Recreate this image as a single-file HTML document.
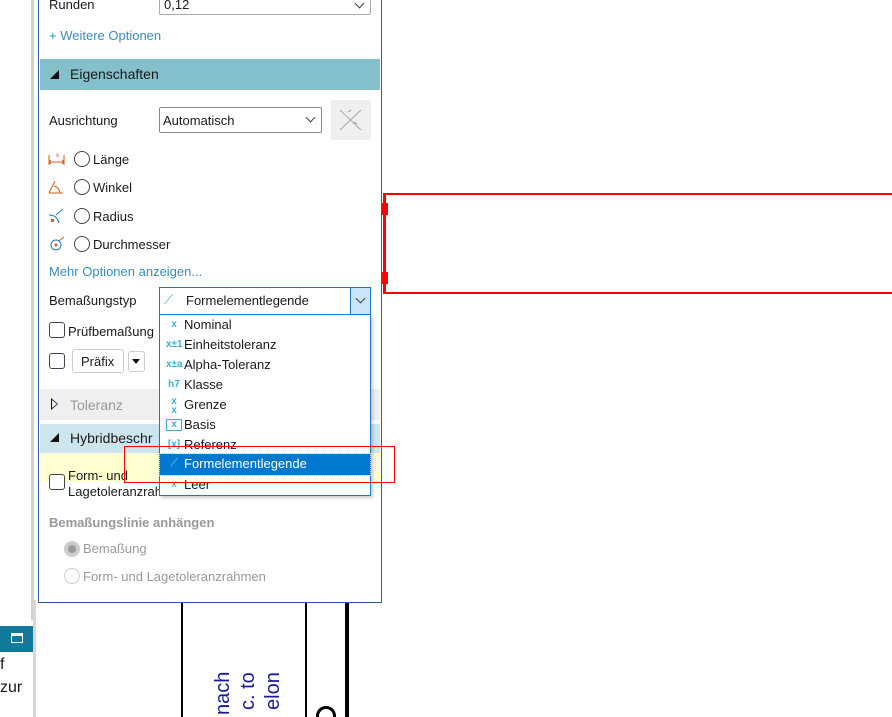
<!DOCTYPE html>
<html><head><meta charset="utf-8"><style>
*{margin:0;padding:0;box-sizing:border-box}
html,body{width:892px;height:717px;overflow:hidden}
body{background:#fff;font-family:"Liberation Sans",Arial,sans-serif;font-size:13px;color:#1a1a1a;position:relative}
.a{position:absolute}
.lbl{position:absolute;font-size:13px;color:#1a1a1a}
.rad{position:absolute;width:16px;height:16px;border:1px solid #444;border-radius:50%;background:#fff}
.cb{position:absolute;width:16px;height:16px;border:1px solid #444;border-radius:3px;background:#fff}
.link{position:absolute;color:#3a8dbb;font-size:13px}
.item{position:absolute;left:0;width:210px;height:20px;line-height:20px;font-size:13px}
.item .ic{position:absolute;left:6px;width:16px;text-align:center;color:#3ab0d0;font-size:10px;font-weight:bold}
.item .t{position:absolute;left:24px}
.chev{position:absolute;width:7px;height:7px;border-right:1px solid #444;border-bottom:1px solid #444;transform:rotate(45deg)}
.vt{position:absolute;width:22px;height:80px;color:#1a1a9a;font-size:20px;writing-mode:vertical-rl;transform:rotate(180deg);line-height:22px;text-align:end}
</style></head><body>
<div class="a" style="left:31px;top:0;width:3px;height:620px;background:#d0d0d0"></div>
<div class="a" style="left:0;top:626px;width:33px;height:26px;background:#127a9c"></div>
<div class="a" style="left:11px;top:633px;width:12px;height:10px;border:1px solid #fff;border-top-width:3px"></div>
<div class="a" style="left:33px;top:600px;width:3px;height:117px;background:#d8d8d8"></div>
<div class="lbl" style="left:0;top:656px;font-size:16px">f</div>
<div class="lbl" style="left:0;top:679px;font-size:16px">zur</div>

<div class="a" style="left:383px;top:193px;width:509px;height:2px;background:#f00"></div>
<div class="a" style="left:383px;top:292px;width:509px;height:2px;background:#f00"></div>
<div class="a" style="left:383px;top:193px;width:3px;height:101px;background:#f00"></div>
<div class="a" style="left:382px;top:203px;width:6px;height:12px;background:#f00"></div>
<div class="a" style="left:382px;top:272px;width:6px;height:12px;background:#f00"></div>
<div class="a" style="left:181px;top:602px;width:2px;height:115px;background:#000"></div>
<div class="a" style="left:305px;top:602px;width:2px;height:115px;background:#000"></div>
<div class="a" style="left:345px;top:602px;width:4px;height:115px;background:#000"></div>
<div class="vt" style="left:212px;top:672px">nach</div>
<div class="vt" style="left:237px;top:672px">c. to</div>
<div class="vt" style="left:262px;top:672px">elon</div>
<div class="a" style="left:316px;top:706px;width:20px;height:20px;border:3px solid #000;border-radius:50%"></div>

<div class="a" style="left:38px;top:-2px;width:344px;height:605px;border:1px solid #2c5ea8;background:#fff"></div>
<div class="lbl" style="left:49px;top:-3px">Runden</div>
<div class="a" style="left:159px;top:-6px;width:212px;height:21px;border:1px solid #aaa;border-radius:2px;background:#fff"></div>
<div class="lbl" style="left:164px;top:-3px">0,12</div>
<div class="chev" style="left:356px;top:0px"></div>
<div class="link" style="left:49px;top:28px">+ Weitere Optionen</div>
<div class="a" style="left:40px;top:59px;width:340px;height:31px;background:#84bfcc"></div>
<div class="a" style="left:50px;top:70px;width:0;height:0;border-left:9px solid transparent;border-bottom:9px solid #111"></div>
<div class="lbl" style="left:70px;top:66px;font-size:14px">Eigenschaften</div>

<div class="lbl" style="left:49px;top:113px">Ausrichtung</div>
<div class="a" style="left:159px;top:107px;width:163px;height:26px;border:1px solid #888;border-radius:2px"></div>
<div class="lbl" style="left:163px;top:113px">Automatisch</div>
<div class="chev" style="left:307px;top:114px"></div>
<div class="a" style="left:331px;top:100px;width:40px;height:40px;background:#efefef;border-radius:3px">
<svg width="40" height="40"><path d="M9 10L30 30M30 10L9 30" stroke="#aaa" stroke-width="1"/><path d="M17 12l3-2M23 22l3 2" stroke="#999"/></svg></div>

<svg class="a" style="left:48px;top:152px" width="18" height="14"><path d="M1 3v10M16 3v10M1 10h15M3 8l-2 2 2 2M14 8l2 2-2 2" stroke="#d45a1c" fill="none"/><text x="8" y="5" font-size="6" fill="#d45a1c">x</text></svg>
<div class="rad" style="left:74px;top:151px"></div><div class="lbl" style="left:93px;top:152px">Länge</div>
<svg class="a" style="left:48px;top:178px" width="18" height="16"><path d="M1 15L7 3M1 15h14M6 8q5 1 6 7" stroke="#d45a1c" fill="none"/></svg>
<div class="rad" style="left:74px;top:179px"></div><div class="lbl" style="left:93px;top:180px">Winkel</div>
<svg class="a" style="left:48px;top:207px" width="18" height="16"><path d="M1 8q8 0 10 8M8 8l7-6" stroke="#1d7fa8" fill="none"/><rect x="3" y="12" width="3" height="3" fill="#d45a1c"/></svg>
<div class="rad" style="left:74px;top:208px"></div><div class="lbl" style="left:93px;top:209px">Radius</div>
<svg class="a" style="left:48px;top:235px" width="18" height="16"><circle cx="8" cy="10" r="5" stroke="#1d7fa8" fill="none"/><circle cx="8" cy="10" r="1.5" fill="#d45a1c"/><path d="M11 6l5-4" stroke="#d45a1c"/></svg>
<div class="rad" style="left:74px;top:236px"></div><div class="lbl" style="left:93px;top:237px">Durchmesser</div>
<div class="link" style="left:49px;top:264px">Mehr Optionen anzeigen...</div>

<div class="lbl" style="left:49px;top:293px">Bemaßungstyp</div>
<div class="cb" style="left:49px;top:322px"></div><div class="lbl" style="left:68px;top:324px">Prüfbemaßung</div>
<div class="cb" style="left:49px;top:353px"></div>
<div class="a" style="left:72px;top:349px;width:52px;height:24px;border:1px solid #ccc;border-radius:3px;background:#fff"></div>
<div class="lbl" style="left:81px;top:354px">Präfix</div>
<div class="a" style="left:128px;top:351px;width:17px;height:21px;border:1px solid #ccc;border-radius:3px"></div>
<div class="a" style="left:132px;top:359px;border-left:4px solid transparent;border-right:4px solid transparent;border-top:5px solid #111"></div>

<div class="a" style="left:40px;top:389px;width:340px;height:31px;background:#efefef"></div>
<div class="a" style="left:51px;top:398px;border-top:6px solid transparent;border-bottom:6px solid transparent;border-left:7px solid #111"></div>
<div class="a" style="left:52px;top:400px;border-top:4px solid transparent;border-bottom:4px solid transparent;border-left:5px solid #efefef"></div>
<div class="lbl" style="left:70px;top:397px;font-size:14px;color:#999">Toleranz</div>
<div class="a" style="left:40px;top:424px;width:340px;height:29px;background:#cde5ec"></div>
<div class="a" style="left:50px;top:433px;width:0;height:0;border-left:9px solid transparent;border-bottom:9px solid #111"></div>
<div class="lbl" style="left:70px;top:430px;font-size:14px">Hybridbeschr</div>
<div class="a" style="left:40px;top:453px;width:340px;height:29px;background:#ffffd0"></div>
<div class="cb" style="left:49px;top:474px"></div>
<div class="lbl" style="left:68px;top:468px">Form- und</div>
<div class="lbl" style="left:68px;top:484px">Lagetoleranzrahmen</div>
<div class="lbl" style="left:49px;top:515px;color:#999;font-weight:bold">Bemaßungslinie anhängen</div>
<div class="rad" style="left:64px;top:541px;border:4px solid #ccc;background:#999"></div>
<div class="lbl" style="left:83px;top:541px;color:#999">Bemaßung</div>
<div class="rad" style="left:64px;top:568px;border-color:#ccc"></div>
<div class="lbl" style="left:83px;top:569px;color:#999">Form- und Lagetoleranzrahmen</div>

<div class="a" style="left:159px;top:287px;width:212px;height:28px;border:1px solid #1979ca;background:#fff"></div>
<div class="a" style="left:350px;top:288px;width:20px;height:26px;background:#cce4f7;border-left:1px solid #1979ca"></div>
<div class="chev" style="left:357px;top:295px"></div>
<div class="lbl" style="left:164px;top:292px;color:#3ab0d0">⟋</div>
<div class="lbl" style="left:186px;top:293px">Formelementlegende</div>
<div class="a" style="left:159px;top:314px;width:212px;height:182px;border:1px solid #1979ca;background:#fff;box-shadow:2px 2px 3px rgba(0,0,0,.2)">
<div class="item" style="top:0"><span class="ic">x</span><span class="t">Nominal</span></div>
<div class="item" style="top:20px"><span class="ic">x±1</span><span class="t">Einheitstoleranz</span></div>
<div class="item" style="top:40px"><span class="ic">x±a</span><span class="t">Alpha-Toleranz</span></div>
<div class="item" style="top:60px"><span class="ic">h7</span><span class="t">Klasse</span></div>
<div class="item" style="top:80px"><span class="ic" style="line-height:9px;top:2px">x<br>x</span><span class="t">Grenze</span></div>
<div class="item" style="top:100px"><span class="ic" style="border:1px solid #3ab0d0;height:12px;line-height:10px;top:4px">x</span><span class="t">Basis</span></div>
<div class="item" style="top:120px"><span class="ic">[x]</span><span class="t">Referenz</span></div>
<div class="item" style="top:139px;left:0;background:#0078d0;color:#fff;height:21px;outline:1px dotted #ffcc66"><span class="ic" style="color:#4ab8d8">⟋</span><span class="t">Formelementlegende</span></div>
<div class="item" style="top:160px"><span class="ic" style="color:#999">x</span><span class="t">Leer</span></div>
</div>
<div class="a" style="left:124px;top:446px;width:271px;height:37px;border:1px solid #f00"></div>
</body></html>
